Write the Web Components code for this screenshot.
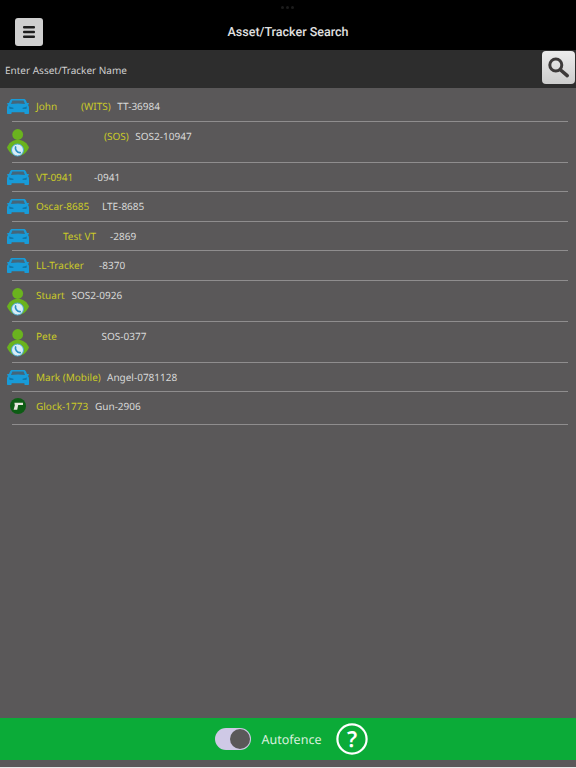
<!DOCTYPE html>
<html>
<head>
<meta charset="utf-8">
<style>
    html, body { margin: 0; height: 100%; background: #e8e8e8; }
    body { font-family: "Noto Sans", "Open Sans", sans-serif; text-rendering: geometricPrecision; }
</style>
</head>
<body>
<tracker-app>
    <top-bar slot="top" title="Asset/Tracker Search"></top-bar>
    <search-bar slot="search" placeholder="Enter Asset/Tracker Name"></search-bar>

    <tracker-row icon="car" name="John" name-w="45" tag="(WITS)" code="TT-36984"></tracker-row>
    <tracker-row icon="person" name="" name-w="68" tag="(SOS)" code="SOS2-10947" tall></tracker-row>
    <tracker-row icon="car" name="VT-0941" name-w="58" code="-0941"></tracker-row>
    <tracker-row icon="car" name="Oscar-8685" name-w="66" code="LTE-8685"></tracker-row>
    <tracker-row icon="car" name="" name-w="27" tag="Test VT" tag-gap="14" code="-2869"></tracker-row>
    <tracker-row icon="car" name="LL-Tracker" name-w="63" code="-8370"></tracker-row>
    <tracker-row icon="person" name="Stuart" name-w="35.5" code="SOS2-0926" tall></tracker-row>
    <tracker-row icon="person" name="Pete" name-w="65.5" code="SOS-0377" tall></tracker-row>
    <tracker-row icon="car" name="Mark (Mobile)" name-w="71" code="Angel-0781128"></tracker-row>
    <tracker-row icon="gun" name="Glock-1773" name-w="59" code="Gun-2906" last></tracker-row>

    <auto-fence slot="bottom"></auto-fence>
</tracker-app>

<script>
const ICONS = {
    car: `<svg width="22" height="16" viewBox="0 0 22 16">
        <path fill="#189bd8" d="M5.2 1 H16.8 C18 1 18.6 1.6 19 2.6 L20 5 H21 C21.6 5 22 5.4 22 5.8 C22 6.3 21.6 6.6 21 6.7 L20.8 6.8 C21.6 7.6 22 8.6 22 9.6 V15 C22 15.6 21.6 16 21 16 H18.4 C17.8 16 17.4 15.6 17.4 15 V14.2 H4.6 V15 C4.6 15.6 4.2 16 3.6 16 H1 C.4 16 0 15.6 0 15 V9.6 C0 8.6 .4 7.6 1.2 6.8 L1 6.7 C.4 6.6 0 6.3 0 5.8 C0 5.4 .4 5 1 5 H2 L3 2.6 C3.4 1.6 4 1 5.2 1 Z"/>
        <path fill="#44667a" d="M5.4 2.4 H16.6 L18 6 C13.5 5.2 8.5 5.2 4 6 Z"/>
        <path fill="#1078aa" d="M2 8.6 L6.4 9.8 V11 H2.6 Z M20 8.6 L15.6 9.8 V11 H19.4 Z"/>
    </svg>`,
    person: `<svg width="22" height="28" viewBox="0 0 22 28">
        <circle cx="10.7" cy="5.5" r="5.4" fill="#6ab31e"/>
        <path fill="#6ab31e" d="M0 18.6 C1.6 14.6 5 10.8 10.8 10.8 C16.6 10.8 20.4 14.6 22 18.6 C20 23.4 16 27 10.8 27 C5.6 27 2 23.4 0 18.6 Z"/>
        <circle cx="10.5" cy="21" r="6" fill="#d8edf6" stroke="#4aa7d6" stroke-width="1"/>
        <path fill="none" stroke="#2b8fc4" stroke-width="1.7" stroke-linecap="round" d="M8.6 18 C7.8 20.2 10 23.8 13.2 23.6"/>
    </svg>`,
    gun: `<svg width="16" height="16" viewBox="0 0 16 16">
        <circle cx="8" cy="8" r="8" fill="#0d5c14"/>
        <path fill="#e6e6dc" d="M4.4 4.8 H13 V7 H8.2 L7.2 11.8 H3.6 L4.8 7.6 Z"/>
    </svg>`
};

class TrackerApp extends HTMLElement {
    constructor() {
        super();
        this.attachShadow({ mode: 'open' }).innerHTML = `
        <style>
            :host { display: flex; flex-direction: column; height: 767px; background: #5a5859; }
            .list { flex: 1; display: flex; flex-direction: column; padding-top: 4px; }
            .foot { padding-bottom: 7px; }
        </style>
        <slot name="top"></slot>
        <slot name="search"></slot>
        <div class="list"><slot></slot></div>
        <div class="foot"><slot name="bottom"></slot></div>`;
    }
}

class TopBar extends HTMLElement {
    constructor() {
        super();
        this.attachShadow({ mode: 'open' }).innerHTML = `
        <style>
            :host { display: grid; grid-template-columns: 1fr auto 1fr; align-items: center; height: 50px; background: #000; position: relative; }
            button { justify-self: start; width: 28px; height: 28px; margin: 18px 0 4px 15px; padding: 0; border: 0; border-radius: 3px; background: #cfcfcf; display: grid; place-items: center; }
            h1 { margin: 18px 0 4px; font: 500 12.5px Roboto, sans-serif; color: #e0e0e0; }
            .dots { position: absolute; top: 6px; left: 281px; display: flex; gap: 2px; }
            .dots i { width: 3px; height: 3px; border-radius: 50%; background: #1c1c1c; }
        </style>
        <button aria-label="Menu">
            <svg width="12" height="12" viewBox="0 0 12 12" fill="#1d1d1d">
                <rect width="12" height="2.4" rx="1"/><rect y="4.8" width="12" height="2.4" rx="1"/><rect y="9.6" width="12" height="2.4" rx="1"/>
            </svg>
        </button>
        <h1></h1>
        <div class="dots"><i></i><i></i><i></i></div>`;
        this.shadowRoot.querySelector('h1').textContent = this.getAttribute('title');
    }
}

class SearchBar extends HTMLElement {
    constructor() {
        super();
        this.attachShadow({ mode: 'open' }).innerHTML = `
        <style>
            :host { display: flex; align-items: center; justify-content: space-between; height: 38px; background: #2d2d2d; }
            span { margin: 2px 0 0 5px; font-size: 10px; color: #d0d0d0; }
            button { width: 33px; height: 33px; margin: -4px 1px 0 0; padding: 0; border: 0; border-radius: 4px; background: linear-gradient(#ececec, #cdcdcd); display: grid; place-items: center; }
        </style>
        <span></span>
        <button aria-label="Search">
            <svg width="24" height="24" viewBox="0 0 24 24" fill="none" stroke="#3d3a3a">
                <circle cx="8.8" cy="10" r="6" stroke-width="3"/>
                <path d="M13.6 15 L20.2 20.6" stroke-width="3.6" stroke-linecap="round"/>
            </svg>
        </button>`;
        this.shadowRoot.querySelector('span').textContent = this.getAttribute('placeholder');
    }
}

class TrackerRow extends HTMLElement {
    constructor() {
        super();
        const tall = this.hasAttribute('tall');
        const tagGap = this.getAttribute('tag-gap') || 6.5;
        this.attachShadow({ mode: 'open' }).innerHTML = `
        <style>
            :host { display: block; height: ${tall ? 41 : this.hasAttribute('last') ? 33 : 29.5}px; font-size: 10px; position: relative; box-sizing: border-box; }
            .row { display: flex; align-items: flex-start; height: 100%; box-sizing: border-box; padding: 6px 0 0 7px; margin-right: 8px; }
            .ico { width: 22px; flex: none; margin-top: ${tall ? 1 : 0}px; display: flex; justify-content: center; }
            .ico svg { display: block; }
            .txt { display: flex; margin: 1px 0 0 7px; line-height: 15px; white-space: nowrap; }
            .name, .tag { color: #caca28; }
            .name { flex: none; }
            .tag { margin-right: ${tagGap}px; }
            .code { color: #d8d8d8; }
            hr { position: absolute; left: 12px; right: 8px; bottom: 0; margin: 0; border: 0; height: 1px; background: #8f8d8e; }
        </style>
        <div class="row">
            <div class="ico">${ICONS[this.getAttribute('icon')]}</div>
            <div class="txt">
                <span class="name" style="width:${this.getAttribute('name-w')}px">${this.getAttribute('name') || ''}</span>
                ${this.hasAttribute('tag') ? `<span class="tag">${this.getAttribute('tag')}</span>` : ''}
                <span class="code">${this.getAttribute('code')}</span>
            </div>
        </div>
        <hr>`;
    }
}

class AutoFence extends HTMLElement {
    constructor() {
        super();
        this.attachShadow({ mode: 'open' }).innerHTML = `
        <style>
            :host { display: flex; align-items: center; justify-content: center; height: 42px; background: #0bab38; color: #d8efdc; font-size: 12.5px; padding-left: 7px; }
            .sw { width: 36px; height: 22px; border-radius: 11px; background: #cfc9e6; position: relative; margin-right: 11px; }
            .sw i { position: absolute; right: 1px; top: 1px; width: 20px; height: 20px; border-radius: 50%; background: #5a5859; }
            .lbl { margin-right: 15px; }
            svg { display: block; }
        </style>
        <div class="sw"><i></i></div>
        <span class="lbl">Autofence</span>
        <svg width="32" height="32" viewBox="0 0 32 32">
            <circle cx="16" cy="16" r="14.6" fill="none" stroke="#fff" stroke-width="2.2"/>
            <text x="16" y="23.5" text-anchor="middle" font-family="Noto Sans, sans-serif" font-weight="600" font-size="22" fill="#fff">?</text>
        </svg>`;
    }
}

customElements.define('tracker-app', TrackerApp);
customElements.define('top-bar', TopBar);
customElements.define('search-bar', SearchBar);
customElements.define('tracker-row', TrackerRow);
customElements.define('auto-fence', AutoFence);
</script>
</body>
</html>
